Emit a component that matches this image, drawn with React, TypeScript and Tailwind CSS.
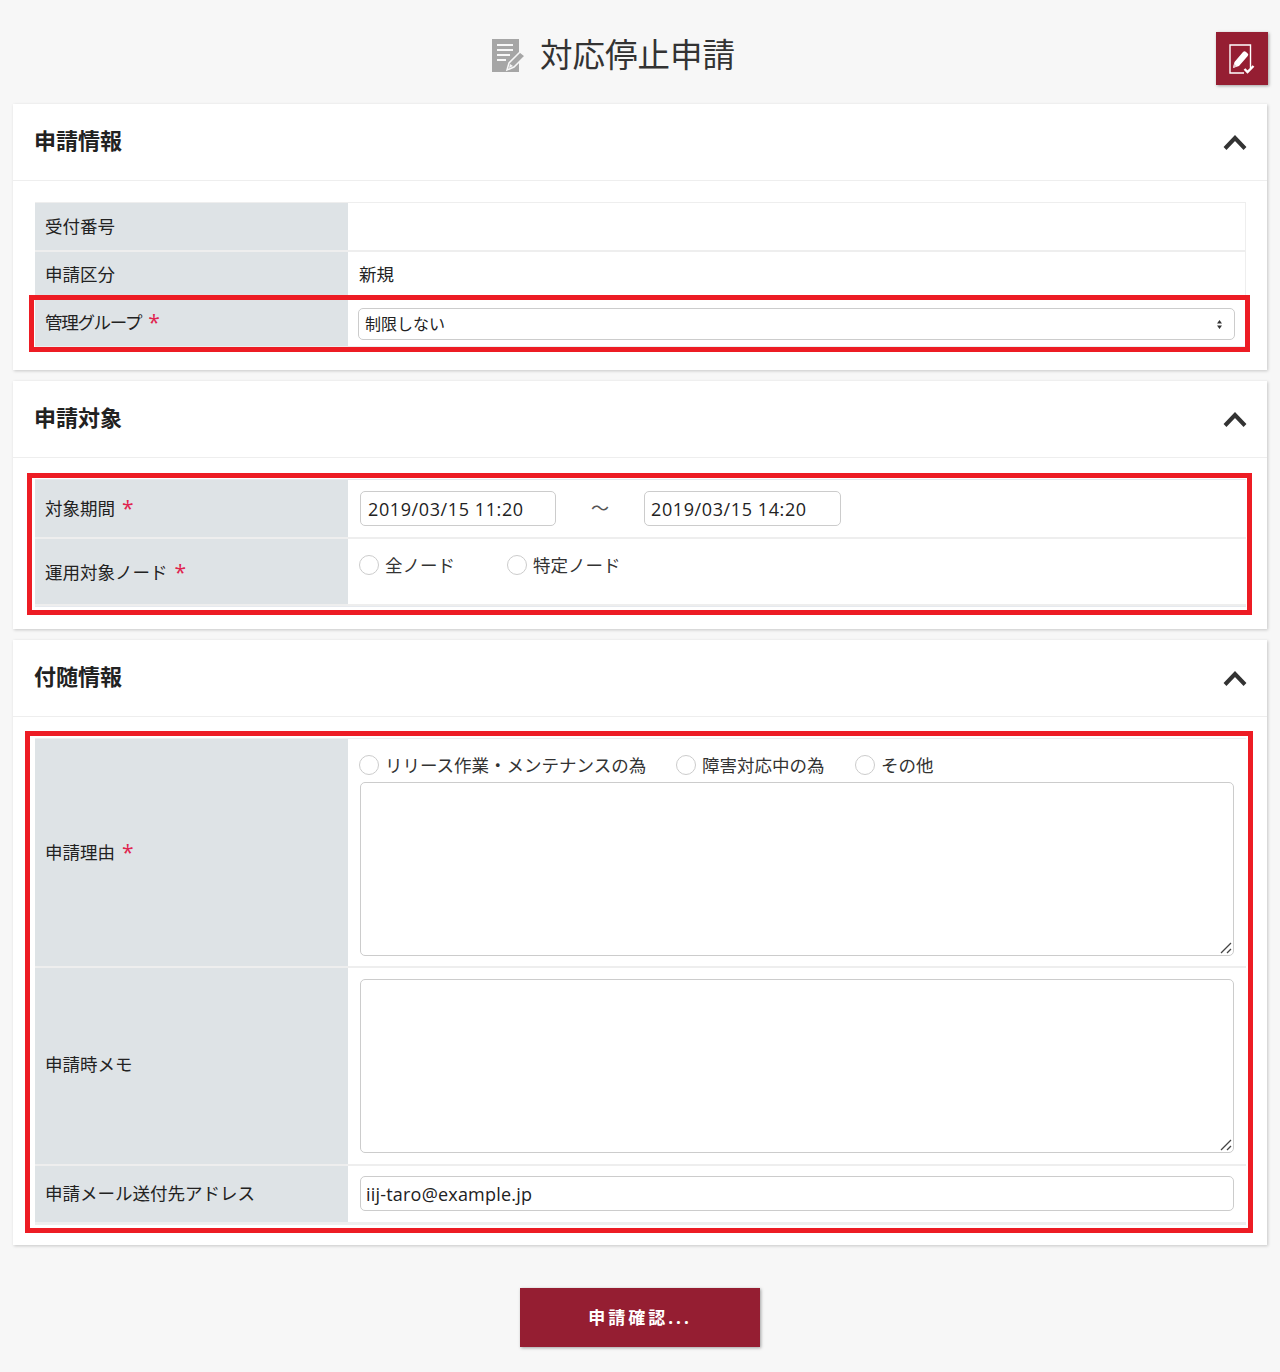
import type { ReactNode } from "react";

const FONT = "font-['Open_Sans','Noto_Sans_CJK_JP',sans-serif]";
const inputClass =
  "block rounded-[5px] border border-[#ccc] bg-white text-[#222] outline-none";

function TitleIcon() {
  return (
    <svg viewBox="0 0 34 34" className="h-[34px] w-[34px] shrink-0">
      <rect x="0" y="1" width="27" height="33" fill="#a6a6a6" />
      <path d="M5 7h16M5 12h16M5 17h13M5 22h9" stroke="#f7f7f7" strokeWidth="2" />
      <path d="M15 32l2-7L28 14l5 4-11 11z" fill="#a6a6a6" stroke="#f7f7f7" strokeWidth="1.5" />
      <path d="M17 30l1-4 3 2z" fill="#f7f7f7" />
    </svg>
  );
}

function ConfirmIcon() {
  return (
    <svg viewBox="0 0 26 30" className="h-[30px] w-[26px]">
      <path d="M21.500 24V1H1v28h14" fill="none" stroke="#fff" strokeWidth="1.400" />
      <path d="M4 24l1.500-6L14 8a2 2 0 0 1 3 0l1.500 1.300a2 2 0 0 1 0 3L10 22z" fill="#fff" />
      <path d="M4 24l1-4.200 3 2.500z" fill="#e8c9cf" />
      <path d="M15.500 25l3 3 6-6" fill="none" stroke="#fff" strokeWidth="2.400" />
    </svg>
  );
}

function Card({ title, children, last }: { title: string; children: ReactNode; last?: boolean }) {
  return (
    <section className={`mx-[13px] w-[1254px] bg-white shadow-[1px_1px_3px_rgba(0,0,0,0.2)] ${last ? "" : "mb-[11px]"}`}>
      <div className="flex h-[77px] items-center justify-between border-b border-[#eee] pr-[20px] pl-[22px]">
        <h2 className="-ml-px pb-[5px] text-[22px] leading-none font-bold text-[#222]">{title}</h2>
        <svg viewBox="0 0 24 17" className="mt-[1px] h-[17px] w-[24px]">
          <path d="M2 14.500L12 4l10 10.500" fill="none" stroke="#333" strokeWidth="4" />
        </svg>
      </div>
      {children}
    </section>
  );
}

function Row({ label, labelClass, required, height, align, children }: {
  label: string;
  labelClass?: string;
  required?: boolean;
  height: string;
  align?: string;
  children?: ReactNode;
}) {
  return (
    <div className={`flex border-b-2 border-[#eee] last:border-b-0 ${height}`}>
      <div className={`flex w-[313px] shrink-0 items-center bg-[#dee3e6] pl-[10px] text-[17.500px] text-[#222] ${align ?? ""}`}>
        <span className={labelClass}>{label}</span>
        {required && <span className="ml-[7px] text-[21px] leading-none text-[#e0244f]">*</span>}
      </div>
      <div className="min-w-0 flex-1">{children}</div>
    </div>
  );
}

function Radio({ label, className }: { label: string; className?: string }) {
  return (
    <label className={`flex items-center text-[17.500px] leading-[20px] text-[#333] ${className ?? ""}`}>
      <input type="radio" name={label} className="mr-[6px] h-[20px] w-[20px] appearance-none rounded-full border border-[#ccc] bg-white" />
      {label}
    </label>
  );
}

function Memo({ className }: { className?: string }) {
  return (
    <div className={`relative w-[874px] ${className ?? ""}`}>
      <textarea className={`${inputClass} h-[174px] w-full resize-none p-[6px]`} />
      <svg viewBox="0 0 12 12" className="pointer-events-none absolute right-[2px] bottom-[2px] h-[12px] w-[12px]">
        <path d="M1 11L11 1M7 11l4-4" stroke="#444" strokeWidth="1.300" />
      </svg>
    </div>
  );
}

export default function App() {
  return (
    <div className={`min-h-[1372px] w-[1280px] bg-[#f7f7f7] ${FONT}`}>
      <header className="flex h-[104px] items-start justify-between pr-[12px] pl-[492px]">
        <div className="mt-[38px] flex h-[34px] items-center gap-[14px]">
          <TitleIcon />
          <h1 className="text-[32.500px] leading-none font-normal whitespace-nowrap text-[#333]">対応停止申請</h1>
        </div>
        <button type="button" className="mt-[32px] flex h-[53px] w-[52px] items-center justify-center bg-[#951e32] shadow-[1px_1px_3px_rgba(0,0,0,0.35)]">
          <ConfirmIcon />
        </button>
      </header>

      <Card title="申請情報">
        <div className="px-[22px] pt-[21px] pb-[21px]">
          <div className="relative w-[1211px] border-y border-r border-[#eee]">
            <Row label="受付番号" height="h-[49px]" />
            <Row label="申請区分" height="h-[47px]">
              <div className="flex h-full items-center pl-[11px] text-[17.500px] text-[#222]">新規</div>
            </Row>
            <Row label="管理グループ" labelClass="tracking-[-1.300px]" required height="h-[49px]">
              <div className="relative mt-[9px] ml-[10px] w-[877px]">
                <select className={`${inputClass} h-[32px] w-full appearance-none pl-[6px] text-[16px]`} defaultValue="none">
                  <option value="none">制限しない</option>
                </select>
                <svg viewBox="0 0 7 11" className="pointer-events-none absolute top-[11px] right-[12px] h-[11px] w-[7px]">
                  <path d="M3.500 1L6 4.500H1zM3.500 10L1 6.500h5z" fill="#333" />
                </svg>
              </div>
            </Row>
            <div className="pointer-events-none absolute top-[92px] -right-[5px] -bottom-[4px] -left-[6px] border-[5px] border-[#ed1c24]" />
          </div>
        </div>
      </Card>

      <Card title="申請対象">
        <div className="px-[22px] pt-[21px] pb-[22px]">
          <div className="relative w-[1211px] border-y border-[#e6e9ee]">
            <Row label="対象期間" required height="h-[59px]">
              <div className="flex h-full items-center pl-[12px] text-[18px]">
                <input className={`${inputClass} h-[35px] w-[196px] px-[7px] tracking-[0.600px]`} defaultValue="2019/03/15 11:20" />
                <span className="w-[88px] text-center text-[#555]">～</span>
                <input className={`${inputClass} h-[35px] w-[197px] px-[6px] tracking-[0.600px]`} defaultValue="2019/03/15 14:20" />
              </div>
            </Row>
            <Row label="運用対象ノード" required height="h-[67px]" align="pt-[1px]">
              <div className="flex pt-[16px] pl-[11px]">
                <Radio label="全ノード" className="w-[148px]" />
                <Radio label="特定ノード" />
              </div>
            </Row>
            <div className="pointer-events-none absolute -top-[7px] -right-[6px] -bottom-[9px] -left-[8px] border-[5px] border-[#ed1c24]" />
          </div>
        </div>
      </Card>

      <Card title="付随情報" last>
        <div className="px-[22px] pt-[21px] pb-[20px]">
          <div className="relative w-[1211px] border-y border-[#eee]">
            <Row label="申請理由" required height="h-[229px]">
              <div className="pt-[16px] pl-[11px]">
                <div className="flex h-[20px]">
                  <Radio label="リリース作業・メンテナンスの為" className="w-[317px]" />
                  <Radio label="障害対応中の為" className="w-[179px]" />
                  <Radio label="その他" />
                </div>
                <Memo className="mt-[7px] ml-px" />
              </div>
            </Row>
            <Row label="申請時メモ" height="h-[198px]" align="pb-[4px]">
              <div className="pt-[11px] pl-[12px]">
                <Memo />
              </div>
            </Row>
            <Row label="申請メール送付先アドレス" height="h-[58px]" align="pb-[2px]">
              <div className="pt-[10px] pl-[12px]">
                <input className={`${inputClass} h-[35px] w-[874px] px-[5px] text-[18px] tracking-[0.200px]`} defaultValue="iij-taro@example.jp" />
              </div>
            </Row>
            <div className="pointer-events-none absolute -top-[8px] -right-[7px] -bottom-[9px] -left-[10px] border-[5px] border-[#ed1c24]" />
          </div>
        </div>
      </Card>

      <div className="flex justify-center pt-[43px]">
        <button type="button" className="h-[59px] w-[240px] bg-[#951e32] text-[17px] font-bold tracking-[3px] text-white shadow-[1px_1px_3px_rgba(0,0,0,0.35)]">
          申請確認...
        </button>
      </div>
    </div>
  );
}
